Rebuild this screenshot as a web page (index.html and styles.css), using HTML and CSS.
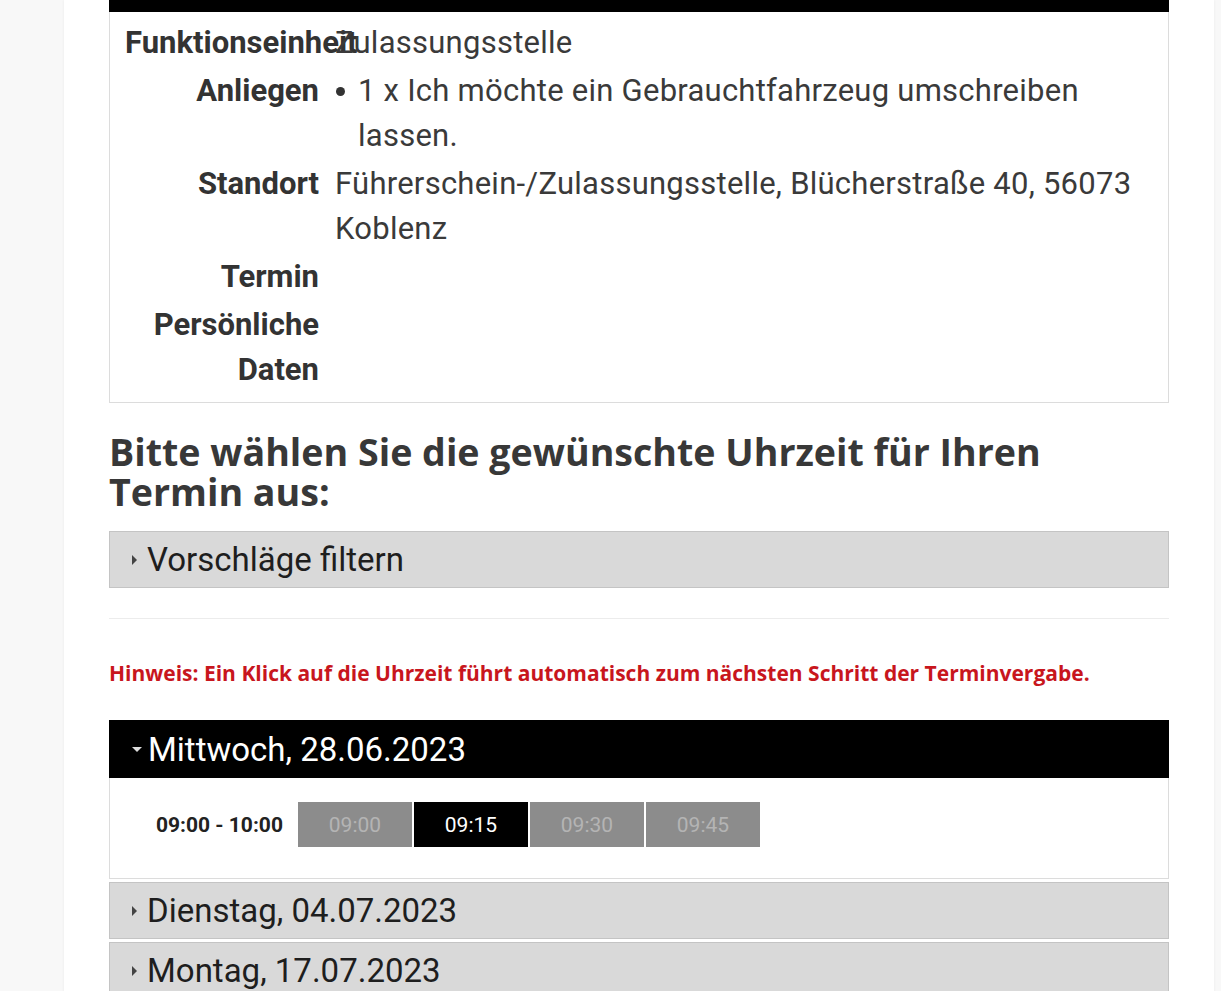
FILE: index.html
```html
<!DOCTYPE html>
<html lang="de">
<head>
    <meta charset="UTF-8">
    <meta name="viewport" content="width=device-width, initial-scale=1.0">
    <title>Terminvereinbarung - Uhrzeit wählen</title>
    <link rel="stylesheet" href="styles.css">
</head>
<body>
    <div class="page">
        <div class="summary-head"></div>
        <dl class="summary">
            <dt>Funktionseinheit</dt>
            <dd>Zulassungsstelle</dd>
            <dt>Anliegen</dt>
            <dd>
                <ul class="concerns">
                    <li>1 x Ich möchte ein Gebrauchtfahrzeug umschreiben lassen.</li>
                </ul>
            </dd>
            <dt>Standort</dt>
            <dd>Führerschein-/Zulassungsstelle, Blücherstraße 40, 56073 Koblenz</dd>
            <dt>Termin</dt>
            <dd></dd>
            <dt>Persönliche Daten</dt>
            <dd></dd>
        </dl>

        <h2 class="title">Bitte wählen Sie die gewünschte Uhrzeit für Ihren Termin aus:</h2>

        <div class="toggle closed"><span class="arrow"></span>Vorschläge filtern</div>

        <hr class="divider">

        <p class="notice">Hinweis: Ein Klick auf die Uhrzeit führt automatisch zum nächsten Schritt der Terminvergabe.</p>

        <div class="day">
            <div class="toggle open"><span class="arrow"></span>Mittwoch, 28.06.2023</div>
            <div class="day-body">
                <span class="slot-range">09:00 - 10:00</span>
                <div class="slots">
                    <button class="slot">09:00</button>
                    <button class="slot selected">09:15</button>
                    <button class="slot">09:30</button>
                    <button class="slot">09:45</button>
                </div>
            </div>
        </div>
        <div class="day">
            <div class="toggle closed"><span class="arrow"></span>Dienstag, 04.07.2023</div>
        </div>
        <div class="day">
            <div class="toggle closed"><span class="arrow"></span>Montag, 17.07.2023</div>
        </div>
    </div>
</body>
</html>
```

FILE: styles.css
```css
body {
    margin: 0;
    background-color: #f8f8f8;
    font-family: Roboto, "Liberation Sans", Arial, sans-serif;
    color: #333;
}
.page {
    width: 1060px;
    margin-left: 64px;
    padding: 0 45px 40px;
    background-color: #fff;
    box-shadow: 0 0 3px rgba(0, 0, 0, 0.06);
    min-height: 991px;
}
.summary-head {
    height: 12px;
    background-color: #000;
}
.summary {
    display: grid;
    grid-template-columns: 194px 1fr;
    column-gap: 16px;
    row-gap: 3px;
    margin: 0;
    padding: 8px 15px 10px;
    border: 1px solid #dcdcdc;
    border-top: none;
    font-size: 31px;
    line-height: 45px;
}
.summary dt {
    font-weight: bold;
    text-align: right;
    color: #333;
}
.summary dd {
    margin: 0;
    color: #3a3a3a;
    letter-spacing: 0.25px;
}
.concerns {
    margin: 0;
    padding: 0;
    list-style: none;
}
.concerns li {
    position: relative;
    padding-left: 23px;
}
.concerns li::before {
    content: "";
    position: absolute;
    left: 1px;
    top: 19px;
    width: 9px;
    height: 9px;
    border-radius: 50%;
    background-color: #333;
}
.title {
    margin: 29px 0 19px;
    font-family: "Open Sans", "Noto Sans", sans-serif;
    font-size: 37.6px;
    line-height: 40px;
    font-weight: bold;
    color: #383838;
}
.toggle {
    display: flex;
    align-items: center;
    height: 55px;
    padding-left: 22px;
    font-size: 33px;
    color: #1e1e1e;
    background-color: #d9d9d9;
    border: 1px solid #c4c4c4;
}
.arrow {
    width: 0;
    height: 0;
    margin-right: 10px;
    border-top: 5px solid transparent;
    border-bottom: 5px solid transparent;
    border-left: 5px solid #444;
}
.toggle.open {
    height: 58px;
    color: #fff;
    background-color: #000;
    border: none;
    padding-left: 23px;
}
.toggle.open .arrow {
    border-left: 5px solid transparent;
    border-right: 5px solid transparent;
    border-top: 5px solid #ddd;
    border-bottom: none;
    margin-right: 6px;
}
.divider {
    margin: 30px 0 0;
    border: none;
    border-top: 1px solid #ececec;
}
.notice {
    margin: 40px 0 33px;
    font-family: "Open Sans", "Noto Sans", sans-serif;
    font-size: 21px;
    font-weight: bold;
    color: #c8161d;
}
.day {
    margin-bottom: 3px;
}
.day-body {
    display: flex;
    align-items: center;
    padding: 24px 0 31px 46px;
    border: 1px solid #dcdcdc;
    border-top: none;
}
.slot-range {
    font-size: 21px;
    font-weight: bold;
    color: #222;
    margin-right: 15px;
}
.slots {
    display: flex;
    gap: 2px;
}
.slot {
    width: 114px;
    height: 45px;
    border: none;
    background-color: #8c8c8c;
    color: #b4b4b4;
    font-family: Roboto, "Liberation Sans", sans-serif;
    font-size: 21px;
    cursor: pointer;
}
.slot.selected {
    background-color: #000;
    color: #fff;
}
```
